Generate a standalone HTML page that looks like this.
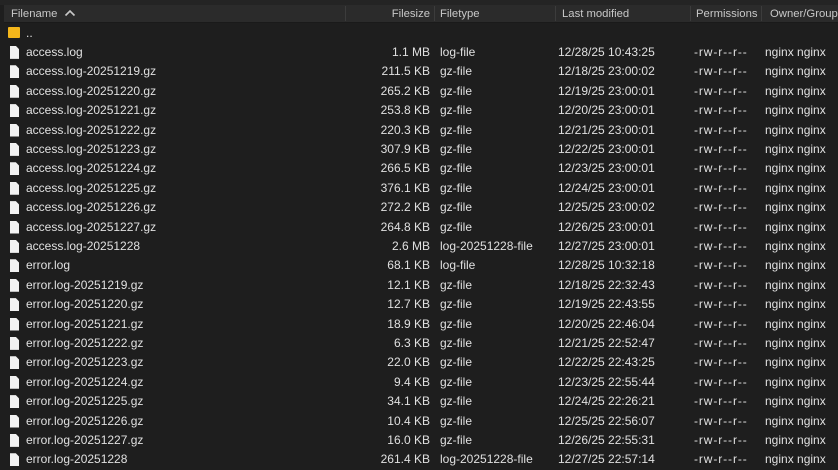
<!DOCTYPE html>
<html><head><meta charset="utf-8"><style>
html,body{margin:0;padding:0;width:838px;height:468px;background:#1e1e1e;overflow:hidden;font-family:"Liberation Sans",sans-serif;font-size:12px;color:#e0e0e0}
.top{position:absolute;left:0;top:0;width:838px;height:5px;background:#242424}
.hdr{position:absolute;left:4px;top:5px;width:834px;height:17px;background:#2b2b2b;border-bottom:1px solid #1a1a1a}
.hdr div{position:absolute;top:1px;height:17px;line-height:17px;color:#c8c8c8;font-size:11.3px}
.sep{position:absolute;top:6px;width:1px;height:15px;background:#3c3c3c}
.row{position:absolute;left:0;width:838px;height:19px;line-height:19px}
.row span{position:absolute;top:0;white-space:nowrap}
.n{left:26px}.s{right:408px;text-align:right}.t{left:440px}.m{left:558px}.p{left:694px;letter-spacing:0.9px}.o{left:765px}
.fi{position:absolute;left:10px;top:3px;width:9px;height:13px;background:#f2f2f2;clip-path:polygon(0 0,65% 0,100% 25%,100% 100%,0 100%)}
.fo{position:absolute;left:8px;top:3px;width:12px;height:11px;background:#f5b71b;border-radius:1px}
#r{position:absolute;left:0;top:1.5px;width:838px;height:468px}
</style></head><body>
<div class="top"></div>
<div class="hdr">
<div style="left:7px">Filename&nbsp;&nbsp;<svg width="12" height="8" viewBox="0 0 12 8" style="vertical-align:0"><path d="M1.5 6.5 L6 2 L10.5 6.5" stroke="#c8c8c8" stroke-width="1.6" fill="none"/></svg></div>
<div style="right:408px">Filesize</div>
<div style="left:436px">Filetype</div>
<div style="left:558px">Last modified</div>
<div style="left:692px">Permissions</div>
<div style="left:766px">Owner/Group</div>
</div>
<div class="sep" style="left:345px"></div>
<div class="sep" style="left:434px"></div>
<div class="sep" style="left:555px"></div>
<div class="sep" style="left:690px"></div>
<div class="sep" style="left:761px"></div>
<div id="r">
<div class="row" style="top:22px"><i class="fo"></i><span class="n">..</span></div>
<div class="row" style="top:41.4px"><i class="fi"></i><span class="n">access.log</span><span class="s">1.1 MB</span><span class="t">log-file</span><span class="m">12/28/25 10:43:25</span><span class="p">-rw-r--r--</span><span class="o">nginx nginx</span></div>
<div class="row" style="top:60.8px"><i class="fi"></i><span class="n">access.log-20251219.gz</span><span class="s">211.5 KB</span><span class="t">gz-file</span><span class="m">12/18/25 23:00:02</span><span class="p">-rw-r--r--</span><span class="o">nginx nginx</span></div>
<div class="row" style="top:80.2px"><i class="fi"></i><span class="n">access.log-20251220.gz</span><span class="s">265.2 KB</span><span class="t">gz-file</span><span class="m">12/19/25 23:00:01</span><span class="p">-rw-r--r--</span><span class="o">nginx nginx</span></div>
<div class="row" style="top:99.6px"><i class="fi"></i><span class="n">access.log-20251221.gz</span><span class="s">253.8 KB</span><span class="t">gz-file</span><span class="m">12/20/25 23:00:01</span><span class="p">-rw-r--r--</span><span class="o">nginx nginx</span></div>
<div class="row" style="top:119px"><i class="fi"></i><span class="n">access.log-20251222.gz</span><span class="s">220.3 KB</span><span class="t">gz-file</span><span class="m">12/21/25 23:00:01</span><span class="p">-rw-r--r--</span><span class="o">nginx nginx</span></div>
<div class="row" style="top:138.4px"><i class="fi"></i><span class="n">access.log-20251223.gz</span><span class="s">307.9 KB</span><span class="t">gz-file</span><span class="m">12/22/25 23:00:01</span><span class="p">-rw-r--r--</span><span class="o">nginx nginx</span></div>
<div class="row" style="top:157.8px"><i class="fi"></i><span class="n">access.log-20251224.gz</span><span class="s">266.5 KB</span><span class="t">gz-file</span><span class="m">12/23/25 23:00:01</span><span class="p">-rw-r--r--</span><span class="o">nginx nginx</span></div>
<div class="row" style="top:177.2px"><i class="fi"></i><span class="n">access.log-20251225.gz</span><span class="s">376.1 KB</span><span class="t">gz-file</span><span class="m">12/24/25 23:00:01</span><span class="p">-rw-r--r--</span><span class="o">nginx nginx</span></div>
<div class="row" style="top:196.6px"><i class="fi"></i><span class="n">access.log-20251226.gz</span><span class="s">272.2 KB</span><span class="t">gz-file</span><span class="m">12/25/25 23:00:02</span><span class="p">-rw-r--r--</span><span class="o">nginx nginx</span></div>
<div class="row" style="top:216px"><i class="fi"></i><span class="n">access.log-20251227.gz</span><span class="s">264.8 KB</span><span class="t">gz-file</span><span class="m">12/26/25 23:00:01</span><span class="p">-rw-r--r--</span><span class="o">nginx nginx</span></div>
<div class="row" style="top:235.4px"><i class="fi"></i><span class="n">access.log-20251228</span><span class="s">2.6 MB</span><span class="t">log-20251228-file</span><span class="m">12/27/25 23:00:01</span><span class="p">-rw-r--r--</span><span class="o">nginx nginx</span></div>
<div class="row" style="top:254.8px"><i class="fi"></i><span class="n">error.log</span><span class="s">68.1 KB</span><span class="t">log-file</span><span class="m">12/28/25 10:32:18</span><span class="p">-rw-r--r--</span><span class="o">nginx nginx</span></div>
<div class="row" style="top:274.2px"><i class="fi"></i><span class="n">error.log-20251219.gz</span><span class="s">12.1 KB</span><span class="t">gz-file</span><span class="m">12/18/25 22:32:43</span><span class="p">-rw-r--r--</span><span class="o">nginx nginx</span></div>
<div class="row" style="top:293.6px"><i class="fi"></i><span class="n">error.log-20251220.gz</span><span class="s">12.7 KB</span><span class="t">gz-file</span><span class="m">12/19/25 22:43:55</span><span class="p">-rw-r--r--</span><span class="o">nginx nginx</span></div>
<div class="row" style="top:313px"><i class="fi"></i><span class="n">error.log-20251221.gz</span><span class="s">18.9 KB</span><span class="t">gz-file</span><span class="m">12/20/25 22:46:04</span><span class="p">-rw-r--r--</span><span class="o">nginx nginx</span></div>
<div class="row" style="top:332.4px"><i class="fi"></i><span class="n">error.log-20251222.gz</span><span class="s">6.3 KB</span><span class="t">gz-file</span><span class="m">12/21/25 22:52:47</span><span class="p">-rw-r--r--</span><span class="o">nginx nginx</span></div>
<div class="row" style="top:351.8px"><i class="fi"></i><span class="n">error.log-20251223.gz</span><span class="s">22.0 KB</span><span class="t">gz-file</span><span class="m">12/22/25 22:43:25</span><span class="p">-rw-r--r--</span><span class="o">nginx nginx</span></div>
<div class="row" style="top:371.2px"><i class="fi"></i><span class="n">error.log-20251224.gz</span><span class="s">9.4 KB</span><span class="t">gz-file</span><span class="m">12/23/25 22:55:44</span><span class="p">-rw-r--r--</span><span class="o">nginx nginx</span></div>
<div class="row" style="top:390.6px"><i class="fi"></i><span class="n">error.log-20251225.gz</span><span class="s">34.1 KB</span><span class="t">gz-file</span><span class="m">12/24/25 22:26:21</span><span class="p">-rw-r--r--</span><span class="o">nginx nginx</span></div>
<div class="row" style="top:410px"><i class="fi"></i><span class="n">error.log-20251226.gz</span><span class="s">10.4 KB</span><span class="t">gz-file</span><span class="m">12/25/25 22:56:07</span><span class="p">-rw-r--r--</span><span class="o">nginx nginx</span></div>
<div class="row" style="top:429.4px"><i class="fi"></i><span class="n">error.log-20251227.gz</span><span class="s">16.0 KB</span><span class="t">gz-file</span><span class="m">12/26/25 22:55:31</span><span class="p">-rw-r--r--</span><span class="o">nginx nginx</span></div>
<div class="row" style="top:448.8px"><i class="fi"></i><span class="n">error.log-20251228</span><span class="s">261.4 KB</span><span class="t">log-20251228-file</span><span class="m">12/27/25 22:57:14</span><span class="p">-rw-r--r--</span><span class="o">nginx nginx</span></div>
</div>
</body></html>
